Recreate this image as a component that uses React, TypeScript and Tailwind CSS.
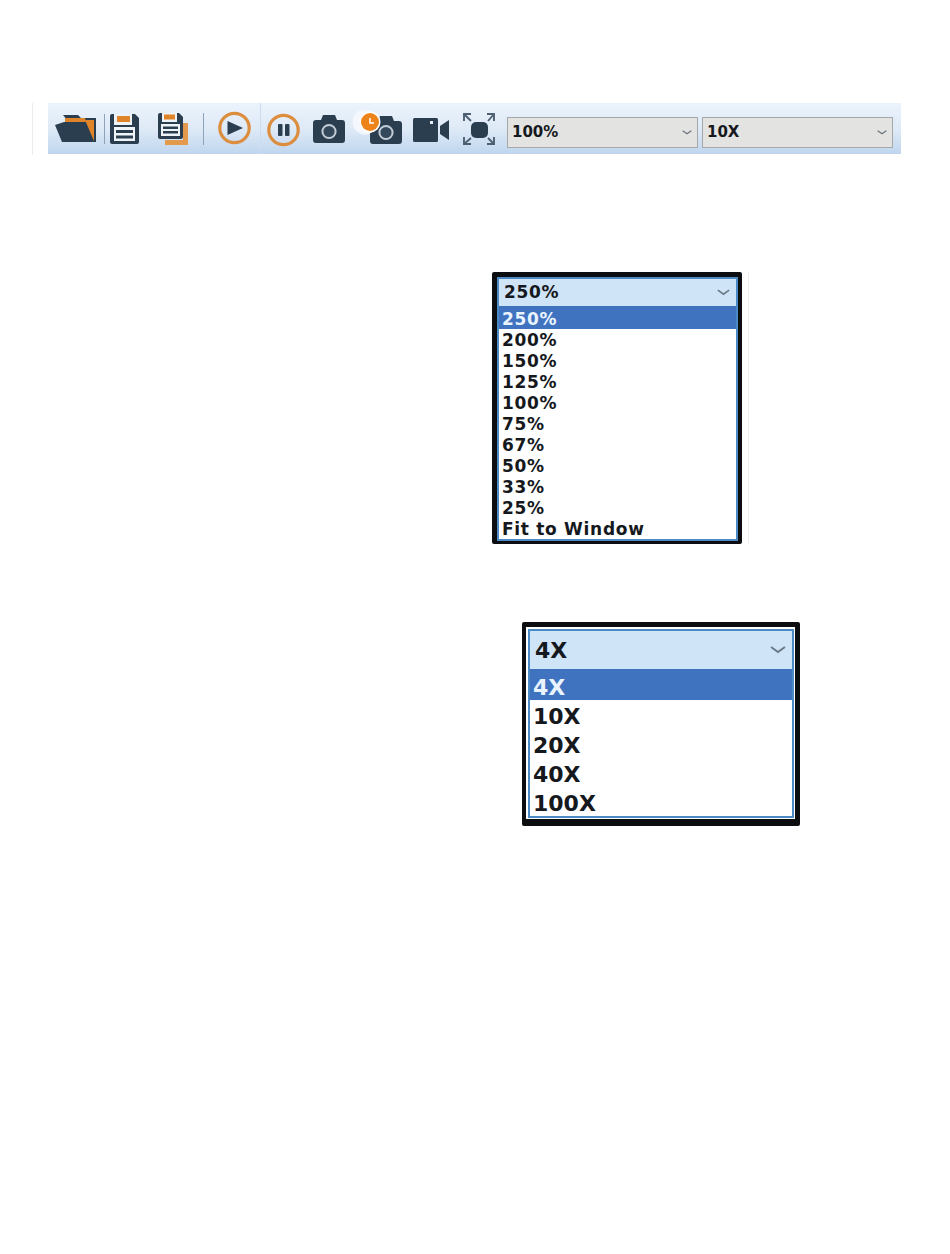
import React from "react";

const DARK = "#2b3e50";
const ORANGE = "#e0842a";

function Chevron({ width = 12, color = "#5f6b76", className }: { width?: number; color?: string; className?: string }) {
  return (
    <svg className={className} width={width} height={Math.round(width * 0.5)} viewBox="0 0 12 6" fill="none">
      <path d="M0.8 0.8 L6 4.6 L11.2 0.8" stroke={color} strokeWidth="1.5" />
    </svg>
  );
}

function Folder() {
  return (
    <svg width="42" height="28" viewBox="0 0 42 28" className="ml-[7px] shrink-0">
      <path d="M8 0 H23 L26 3 H41 V27 H30 Z" fill={DARK} />
      <path d="M10 3 H30 L31 7 H10 Z" fill={ORANGE} />
      <path d="M30 5 H39 V26 Z" fill={ORANGE} />
      <path d="M0 10 L9 7 H29 L37 27 H7 Z" fill={DARK} />
    </svg>
  );
}

function Save() {
  return (
    <svg width="29" height="30" viewBox="0 0 29 30" className="ml-[5px] shrink-0">
      <path d="M2 0 H25 L29 4 V28 a2 2 0 0 1 -2 2 H2 a2 2 0 0 1 -2 -2 V2 a2 2 0 0 1 2 -2 Z" fill={DARK} />
      <rect x="4" y="0" width="18" height="11" fill="#eef3f8" />
      <rect x="7" y="2" width="13" height="6" fill={ORANGE} />
      <rect x="4" y="13" width="21" height="14" fill="#eef3f8" />
      <rect x="6" y="16" width="17" height="3" fill={DARK} />
      <rect x="6" y="21.5" width="17" height="3" fill={DARK} />
    </svg>
  );
}

function SaveAll() {
  return (
    <svg width="30" height="32" viewBox="0 0 30 32" className="ml-[19px] shrink-0">
      <path d="M25 10 H30 V32 H7 V27 H25 Z" fill="#e39a4c" />
      <path d="M2 0 H21 L25 4 V24 a2 2 0 0 1 -2 2 H2 a2 2 0 0 1 -2 -2 V2 a2 2 0 0 1 2 -2 Z" fill={DARK} />
      <rect x="4" y="0" width="15" height="9" fill="#eef3f8" />
      <rect x="6" y="1.5" width="11" height="5" fill={ORANGE} />
      <rect x="3" y="11" width="19" height="12" fill="#eef3f8" />
      <rect x="5" y="13.5" width="15" height="2.5" fill={DARK} />
      <rect x="5" y="18" width="15" height="2.5" fill={DARK} />
    </svg>
  );
}

function Ring({ className, children }: { className?: string; children: React.ReactNode }) {
  return (
    <svg width="33" height="34" viewBox="0 0 33 34" className={className}>
      <circle cx="16.5" cy="17" r="14.7" fill="none" stroke="#dc8d3e" strokeWidth="3.2" />
      {children}
    </svg>
  );
}

function Camera({ className }: { className?: string }) {
  return (
    <svg width="32" height="28" viewBox="0 0 32 28" className={className}>
      <path d="M3 5 H8 L10 0 H22 L24 5 H29 a3 3 0 0 1 3 3 V25 a3 3 0 0 1 -3 3 H3 a3 3 0 0 1 -3 -3 V8 a3 3 0 0 1 3 -3 Z" fill={DARK} />
      <circle cx="16" cy="16.5" r="6.6" fill="#34485b" stroke="#c3ccd5" strokeWidth="2" />
    </svg>
  );
}

function TimerCamera() {
  return (
    <div className="relative ml-[16px] h-[30px] w-[41px] shrink-0">
      <Camera className="absolute bottom-0 right-0" />
      <svg width="30" height="30" viewBox="0 0 30 30" className="absolute -left-[9px] -top-[5px]">
        <circle cx="13" cy="13" r="12.5" fill="#f4f8fc" />
        <circle cx="18" cy="13" r="10.5" fill="#ffffff" />
        <circle cx="18" cy="13" r="9" fill="#ec8419" />
        <path d="M18 9 V14 H22" stroke="#ffffff" strokeWidth="1.5" fill="none" />
      </svg>
    </div>
  );
}

function Video() {
  return (
    <svg width="36" height="24" viewBox="0 0 36 24" className="ml-[11px] mt-[2px] shrink-0">
      <rect x="0" y="0" width="25" height="24" rx="1.5" fill={DARK} />
      <rect x="17" y="3" width="3" height="3" fill="#e8eef5" />
      <path d="M27 8 L36 2 V22 L27 16 Z" fill={DARK} />
    </svg>
  );
}

function Fullscreen() {
  return (
    <svg width="32" height="32" viewBox="0 0 32 32" className="ml-[14px] shrink-0">
      <rect x="8" y="9" width="17" height="16" rx="5" fill={DARK} />
      <g stroke="#4d6072" strokeWidth="1.9" fill="none">
        <path d="M1 8 V1 H8 M1 1 L8 8" />
        <path d="M24 1 H31 V8 M31 1 L25 8" />
        <path d="M1 24 V31 H8 M1 31 L8 25" />
        <path d="M24 31 H31 V24 M31 31 L25 25" />
      </g>
    </svg>
  );
}

function ToolbarSelect({ label, className }: { label: string; className: string }) {
  return (
    <div className={`mt-[8px] flex h-[31px] shrink-0 items-center justify-between border border-[#a5a8aa] bg-[#e3e3e1] pl-[4px] pr-[5px] font-['DejaVu_Sans'] text-[15px] font-bold text-[#15191d] ${className}`}>
      <span>{label}</span>
      <Chevron width={10} color="#6a747d" />
    </div>
  );
}

function Dropdown({
  current,
  items,
  frameClass,
  headerClass,
  rowClass,
  textClass,
  chevron,
}: {
  current: string;
  items: string[];
  frameClass: string;
  headerClass: string;
  rowClass: string;
  textClass: string;
  chevron: number;
}) {
  return (
    <div className={`rounded-[2px] border-[#0b0d10] bg-white ${frameClass}`}>
      <div className="border-2 border-[#4b8ac4]">
        <div className={`flex items-center justify-between bg-[#cfe4f7] pr-[6px] ${headerClass} ${textClass} text-[#15191d]`}>
          <span>{current}</span>
          <Chevron width={chevron} color="#6b7a88" />
        </div>
        <div className="border-t-2 border-[#3f72bd] bg-white">
          {items.map((it, i) => (
            <div
              key={it}
              className={`flex items-center pl-[3px] pt-[3px] ${rowClass} ${textClass} ${i === 0 ? "bg-[#3f72bf] text-[#e9f4ff]" : "text-[#15191d]"}`}
            >
              {it}
            </div>
          ))}
        </div>
      </div>
    </div>
  );
}

export default function App() {
  return (
    <div className="h-[1254px] w-[950px] overflow-hidden bg-white pt-[103px]">
      <div className="ml-[32px] flex h-[52px]">
        <div className="w-px bg-[#ececec]" />
        <div className="ml-[15px] flex h-[51px] w-[853px] items-center bg-gradient-to-b from-[#ebf3fc] via-[#dfeaf7] to-[#bfd6ee]">
          <Folder />
          <div className="ml-[7px] h-[30px] w-px bg-[#8ea3b7]" />
          <Save />
          <SaveAll />
          <div className="ml-[15px] h-[32px] w-px bg-[#8ea3b7]" />
          <Ring className="ml-[14px] mt-[-2px] shrink-0">
            <path d="M9.5 10 L25 17 L9.5 24 Z" fill={DARK} />
          </Ring>
          <div className="ml-[9px] h-[51px] w-px bg-[#cddcec]" />
          <Ring className="ml-[6px] mt-[2px] shrink-0">
            <rect x="11" y="11" width="4.5" height="12" rx="1" fill={DARK} />
            <rect x="18" y="11" width="4.5" height="12" rx="1" fill={DARK} />
          </Ring>
          <Camera className="ml-[13px] shrink-0" />
          <TimerCamera />
          <Video />
          <Fullscreen />
          <ToolbarSelect label="100%" className="ml-[12px] w-[191px]" />
          <ToolbarSelect label="10X" className="ml-[4px] w-[191px]" />
        </div>
      </div>

      <div className="ml-[492px] mt-[117px] flex items-stretch">
        <Dropdown
          current="250%"
          items={["250%", "200%", "150%", "125%", "100%", "75%", "67%", "50%", "33%", "25%", "Fit to Window"]}
          frameClass="w-[250px] border-l-[5px] border-r-[4px] border-t-[5px] border-b-[3px]"
          headerClass="h-[27px] pl-[5px]"
          rowClass="h-[21px]"
          textClass="font-['DejaVu_Sans'] text-[17px] font-bold tracking-[0.7px]"
          chevron={13}
        />
        <div className="ml-[6px] w-px bg-[#f1eeea]" />
      </div>

      <Dropdown
        current="4X"
        items={["4X", "10X", "20X", "40X", "100X"]}
        frameClass="ml-[522px] mt-[78px] w-[278px] border-l-[4px] border-r-[5px] border-t-[5px] border-b-[7px] pl-[2px] pr-[1px] pt-[2px] pb-[1px]"
        headerClass="h-[38px] pl-[5px]"
        rowClass="h-[29px]"
        textClass="font-['DejaVu_Sans'] text-[22px] font-bold"
        chevron={16}
      />
    </div>
  );
}
